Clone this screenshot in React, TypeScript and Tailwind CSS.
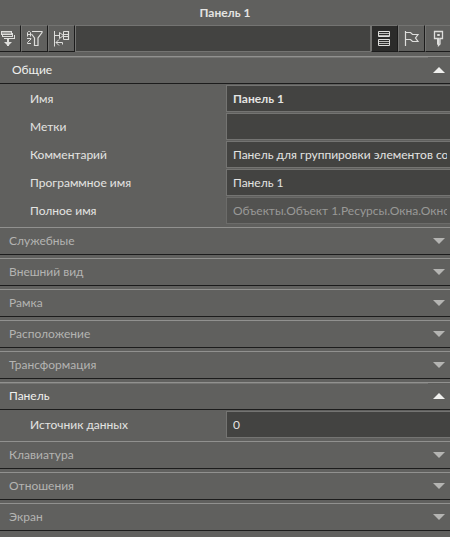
import { useId, useState, type ReactNode } from "react";
import clsx from "clsx";

type Field = {
  label: string;
  value: string;
  bold?: boolean;
  readOnly?: boolean;
};

type Section = {
  title: string;
  indent?: boolean;
  open?: boolean;
  fields?: Field[];
};

const sections: Section[] = [
  {
    title: "Общие",
    indent: true,
    open: true,
    fields: [
      { label: "Имя", value: "Панель 1", bold: true },
      { label: "Метки", value: "" },
      { label: "Комментарий", value: "Панель для группировки элементов содержимого" },
      { label: "Программное имя", value: "Панель 1" },
      { label: "Полное имя", value: "Объекты.Объект 1.Ресурсы.Окна.Окно 1.Панель 1", readOnly: true },
    ],
  },
  { title: "Служебные" },
  { title: "Внешний вид" },
  { title: "Рамка" },
  { title: "Расположение" },
  { title: "Трансформация" },
  { title: "Панель", open: true, fields: [{ label: "Источник данных", value: "0" }] },
  { title: "Клавиатура" },
  { title: "Отношения" },
  { title: "Экран" },
];

function Icon({ children }: { children: ReactNode }) {
  return (
    <svg
      aria-hidden="true"
      className="h-[17px] w-[17px] shrink-0"
      fill="none"
      stroke="#dededc"
      strokeWidth="1"
      viewBox="0 0 17 17"
    >
      {children}
    </svg>
  );
}

function CollapseIcon() {
  return (
    <Icon>
      <path d="M2 1.5h11M2.5 1v4M2 4.5h11M12.5 1v3" />
      <path d="M2 2h10v2H2z" fill="#dededc" opacity="0.5" stroke="none" />
      <path d="M13.5 3v4M3.5 5v2M3 6.5h11M15.5 5v4M5 8.5h11" />
      <path d="M8 9h2v3H8z" fill="#dededc" stroke="none" />
      <path d="M5 12h8l-3 3v1H8v-1z" fill="#dededc" stroke="none" />
    </Icon>
  );
}

function SortFilterIcon() {
  return (
    <Icon>
      <path d="M1.5 6.5v-4l1-1h1l1 1v4M1.5 4.5h3M1 8.5h4v.5l-3.5 3.5v1H5" />
      <path d="M6 1.5h10v1l-4 5.5v7.5H8.5V8l-3-4" strokeWidth="1.2" />
    </Icon>
  );
}

function TreeIcon() {
  return (
    <Icon>
      <path d="M1.5 1v15.5M2 5.5h4M6.5 2.5v6l4-3zM10.5 1.5v8" />
      <path d="M10.5 1.5h5v8h-5M10.5 4.5h5M10.5 6.5h5" strokeWidth="1.2" />
      <path d="M6 9.5L3 12.5l3 3M3 12.5h6.5v2" />
    </Icon>
  );
}

function RowsIcon() {
  return (
    <Icon>
      <path d="M2.5 1.5h11v5h-11zM2.5 9.5h11v6h-11z" />
      <path d="M3 3.5h10M3 5.5h10M3 11.5h10M3 13.5h10" opacity="0.8" />
    </Icon>
  );
}

function FlagIcon() {
  return (
    <Icon>
      <path d="M2.5 1v15M3 2.5h4.5l2 2H15l-2.5 3.5 2.5 3.5H9.5l-2-2H3" strokeWidth="1.2" />
    </Icon>
  );
}

function PinIcon() {
  return (
    <Icon>
      <path d="M4.5 1.5h8v7H10v5.5l-1.5 1.5V8.5h-4z" strokeWidth="1.3" />
      <path d="M7.5 8.5V14l1 1.5" />
      <path d="M7.5 4.5h2v1h-2z" />
    </Icon>
  );
}

function ToolButton({
  label,
  className = "w-[27px] border-l",
  active,
  children,
}: {
  label: string;
  className?: string;
  active?: boolean;
  children: ReactNode;
}) {
  return (
    <button
      aria-label={label}
      aria-pressed={active}
      className={clsx(
        "flex h-[27px] shrink-0 items-center justify-center border-t border-r border-b border-t-[#747472] border-r-[#1c1c1c] border-b-[#1c1c1c] border-l-[#747472]",
        active && "bg-[#2b2b2a]",
        className,
      )}
      type="button"
    >
      {children}
    </button>
  );
}

function FieldRow({ field }: { field: Field }) {
  const id = useId();

  return (
    <div className="flex items-center">
      <label className="w-[226px] shrink-0 pl-[30px] text-[#e4e4e2]" htmlFor={id}>
        {field.label}
      </label>
      <input
        className={clsx(
          "h-[27px] min-w-0 flex-1 border border-r-0 pr-[3px] pl-1.5 outline-none",
          field.bold && "font-bold",
          field.readOnly
            ? "border-[#6c6c6a] bg-[#525250] text-[#999997]"
            : "border-[#747472] bg-[#434341] text-[#e4e4e2]",
        )}
        defaultValue={field.value}
        id={id}
        readOnly={field.readOnly}
        type="text"
      />
    </div>
  );
}

function PropertySection({ section }: { section: Section }) {
  const [open, setOpen] = useState(Boolean(section.open));

  return (
    <section className="mb-[3px]">
      <button
        aria-expanded={open}
        className={clsx(
          "flex h-7 w-full items-center border-t border-b border-t-[#91918f] border-b-[#1c1c1c]",
          open ? "text-[#f0f0ee]" : "text-[#b4b4b2]",
        )}
        onClick={() => setOpen(!open)}
        type="button"
      >
        <span
          className={clsx(
            "flex flex-1 items-center self-stretch border-y border-b-transparent",
            section.indent ? "pl-3" : "pl-[9px]",
            open ? "border-t-[#747472]" : "border-t-transparent",
          )}
        >
          {section.title}
        </span>
        <svg aria-hidden="true" className="mx-[5px] h-1.5 w-3" fill="currentColor" viewBox="0 0 12 6">
          <path d={open ? "M0 6h12L6 0z" : "M0 0h12L6 6z"} />
        </svg>
      </button>
      {open && section.fields && (
        <div className="flex flex-col gap-px pt-px">
          {section.fields.map((field) => (
            <FieldRow field={field} key={field.label} />
          ))}
        </div>
      )}
    </section>
  );
}

export default function App() {
  return (
    <main className="min-h-screen overflow-hidden bg-[#60605e] font-['Lato','Noto_Sans',sans-serif] text-xs text-[#e4e4e2]">
      <h1 className="flex h-[25px] items-center justify-center font-bold">Панель 1</h1>
      <div className="mb-1 flex">
        <ToolButton className="w-[21px] pr-1.5" label="Свернуть все">
          <CollapseIcon />
        </ToolButton>
        <ToolButton label="Сортировка">
          <SortFilterIcon />
        </ToolButton>
        <ToolButton label="Структура">
          <TreeIcon />
        </ToolButton>
        <input
          aria-label="Поиск"
          className="h-[27px] min-w-0 flex-1 border border-[#747472] bg-[#434341] px-1.5 outline-none"
          type="text"
        />
        <ToolButton active label="Список">
          <RowsIcon />
        </ToolButton>
        <ToolButton label="Отмеченные">
          <FlagIcon />
        </ToolButton>
        <ToolButton className="w-[25px] border-r-0 border-l" label="Закрепить">
          <PinIcon />
        </ToolButton>
      </div>
      {sections.map((section) => (
        <PropertySection key={section.title} section={section} />
      ))}
    </main>
  );
}
